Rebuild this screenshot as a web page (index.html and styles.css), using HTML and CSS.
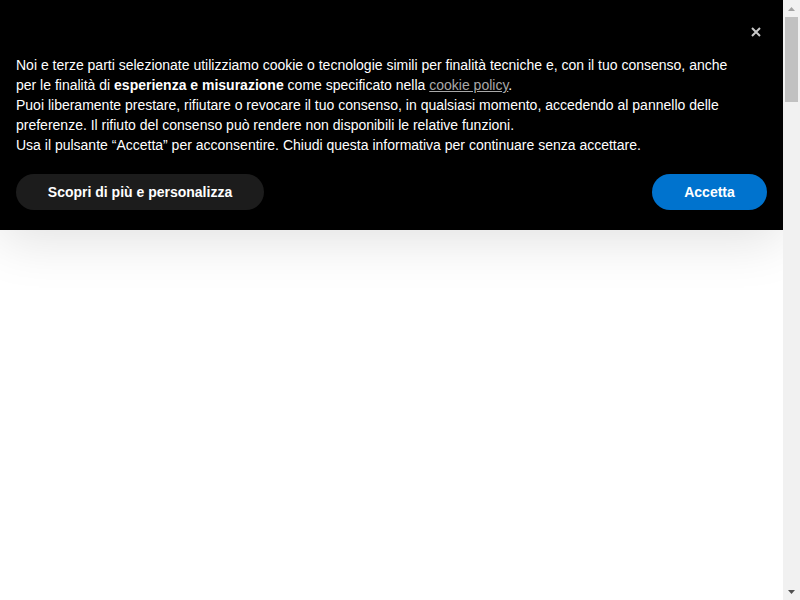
FILE: index.html
```html
<!DOCTYPE html>
<html>
<head>
    <title>Cookie</title>
    <link rel="stylesheet" href="styles.css">
</head>
<body>
    <div class="window">
        <div class="viewport">
            <div class="banner">
                <div class="banner-top">
                    <button type="button" class="close-button" aria-label="Chiudi">
                        <svg width="10" height="10" viewBox="0 0 10 10">
                            <path d="M1 1L9 9M9 1L1 9" stroke="#c8c8c8" stroke-width="2" />
                        </svg>
                    </button>
                </div>
                <p class="banner-text">
                    Noi e terze parti selezionate utilizziamo cookie o tecnologie simili per finalità tecniche e, con il tuo consenso, anche per le finalità di <b>esperienza e misurazione</b> come specificato nella <a href="#">cookie policy</a>.<br>
                    Puoi liberamente prestare, rifiutare o revocare il tuo consenso, in qualsiasi momento, accedendo al pannello delle preferenze. Il rifiuto del consenso può rendere non disponibili le relative funzioni.<br>
                    Usa il pulsante “Accetta” per acconsentire. Chiudi questa informativa per continuare senza accettare.
                </p>
                <div class="button-container">
                    <button type="button" class="more-button">Scopri di più e personalizza</button>
                    <button type="button" class="accept-button">Accetta</button>
                </div>
            </div>
        </div>

        <!-- fake page scrollbar -->
        <div class="scrollbar">
            <div class="scroll-arrow">
                <svg width="7" height="4" viewBox="0 0 7 4"><path d="M0 4L3.5 0L7 4Z" fill="#a3a3a3" /></svg>
            </div>
            <div class="scroll-track">
                <div class="scroll-thumb"></div>
            </div>
            <div class="scroll-arrow">
                <svg width="7" height="4" viewBox="0 0 7 4"><path d="M0 0L7 0L3.5 4Z" fill="#505050" /></svg>
            </div>
        </div>
    </div>
</body>
</html>
```

FILE: styles.css
```css
html,
body {
    margin: 0;
    padding: 0;
    height: 100%;
    overflow: hidden;
}

body {
    font-family: "Liberation Sans", Arial, sans-serif;
    background-color: #fff;
}

.window {
    display: flex;
    height: 100vh;
}

.viewport {
    flex: 1;
    min-width: 0;
}

.banner {
    height: 230px;
    box-sizing: border-box;
    padding: 16px 16px 20px;
    background-color: #000;
    color: #fff;
    box-shadow: 0 10px 50px rgba(0, 0, 0, 0.12);
}

.banner-top {
    display: flex;
    justify-content: flex-end;
    height: 39px;
}

.close-button {
    width: 22px;
    height: 32px;
    padding: 0;
    border: none;
    background: none;
    display: flex;
    align-items: center;
    justify-content: center;
    cursor: pointer;
}

.banner-text {
    margin: 0;
    padding-right: 24px;
    font-size: 14px;
    line-height: 20px;
}

.banner-text b {
    font-weight: bold;
}

.banner-text a {
    color: #a9a9a9;
    text-decoration: underline;
}

.button-container {
    display: flex;
    justify-content: space-between;
    margin-top: 19px;
}

.more-button,
.accept-button {
    height: 36px;
    border: none;
    border-radius: 18px;
    color: #fff;
    font-family: "Liberation Sans", Arial, sans-serif;
    font-size: 14px;
    font-weight: bold;
    cursor: pointer;
}

.more-button {
    width: 248px;
    background-color: #1c1c1c;
}

.accept-button {
    width: 115px;
    background-color: #0073ce;
}

.scrollbar {
    width: 17px;
    display: flex;
    flex-direction: column;
    background-color: #f1f1f1;
}

.scroll-arrow {
    height: 17px;
    display: flex;
    align-items: center;
    justify-content: center;
}

.scroll-track {
    flex: 1;
    padding: 0 2px;
}

.scroll-thumb {
    height: 85px;
    background-color: #c1c1c1;
}
```
